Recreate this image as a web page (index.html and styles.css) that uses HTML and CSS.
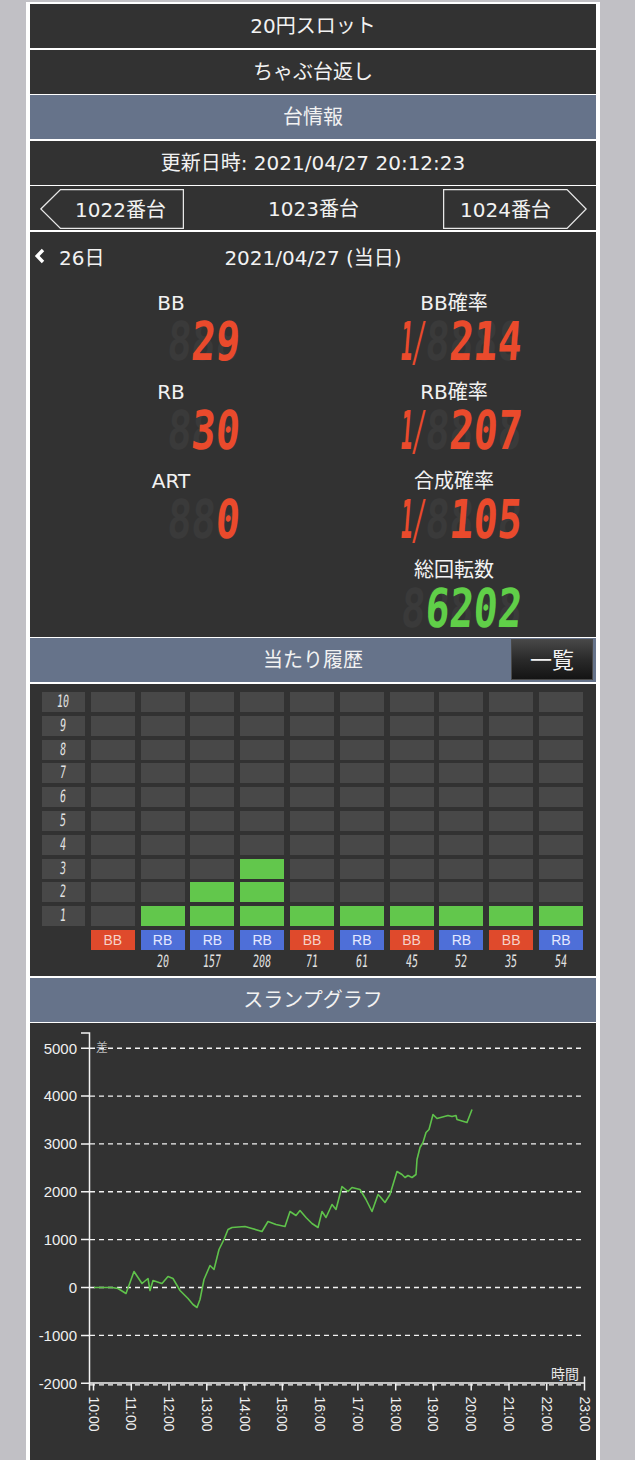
FILE: index.html
```html
<!DOCTYPE html>
<html lang="ja">
	<head>
		<meta charset="utf-8" />
		<title>台情報</title>
		<link rel="stylesheet" href="styles.css">
	</head>
	<body>
		<div class="page">
			<div class="bar">20円スロット</div>
			<div class="bar">ちゃぶ台返し</div>
			<div class="bar blue">台情報</div>
			<div class="bar">更新日時: 2021/04/27 20:12:23</div>

			<!-- 台移動 -->
			<div class="nav">
				<a class="navbtn prev-btn">
					<svg class="btn-shape" width="144" height="40" viewBox="0 0 144 40"><polygon points="0.8,20 20.5,0.6 143.4,0.6 143.4,39.4 20.5,39.4" /></svg>
					<span>1022番台</span>
				</a>
				<div class="cur">1023番台</div>
				<a class="navbtn next-btn">
					<svg class="btn-shape" width="144" height="40" viewBox="0 0 144 40"><polygon points="0.6,0.6 124,0.6 143.2,20 124,39.4 0.6,39.4" /></svg>
					<span>1024番台</span>
				</a>
			</div>

			<!-- 当日データ -->
			<div class="info">
				<div class="dateline">
					<a class="prev-day">
						<svg width="12" height="16" viewBox="0 0 12 16"><polyline points="9,2 3.2,8 9,14" /></svg>
						<span>26日</span>
					</a>
					<div class="date">2021/04/27 (当日)</div>
					<div></div>
				</div>

				<div class="stats">
					<div class="stat">
						<div class="label">BB</div>
						<div class="seg short"><div class="digits"><span class="ghost">888</span><span class="val">29</span></div></div>
					</div>
					<div class="stat">
						<div class="label">BB確率</div>
						<div class="seg wide"><span class="frac"><span>1/</span></span><div class="digits"><span class="ghost">8888</span><span class="val">214</span></div></div>
					</div>
					<div class="stat">
						<div class="label">RB</div>
						<div class="seg short"><div class="digits"><span class="ghost">888</span><span class="val">30</span></div></div>
					</div>
					<div class="stat">
						<div class="label">RB確率</div>
						<div class="seg wide"><span class="frac"><span>1/</span></span><div class="digits"><span class="ghost">8888</span><span class="val">207</span></div></div>
					</div>
					<div class="stat">
						<div class="label">ART</div>
						<div class="seg short"><div class="digits"><span class="ghost">888</span><span class="val">0</span></div></div>
					</div>
					<div class="stat">
						<div class="label">合成確率</div>
						<div class="seg wide"><span class="frac"><span>1/</span></span><div class="digits"><span class="ghost">8888</span><span class="val">105</span></div></div>
					</div>
					<div class="stat"></div>
					<div class="stat">
						<div class="label">総回転数</div>
						<div class="seg wide green"><div class="digits"><span class="ghost">88888</span><span class="val">6202</span></div></div>
					</div>
				</div>
			</div>

			<!-- 当たり履歴 -->
			<div class="bar blue hist-head">当たり履歴<a class="listbtn">一覧</a></div>
			<div class="hist">
				<i class="lab"><b>10</b></i><i></i><i></i><i></i><i></i><i></i><i></i><i></i><i></i><i></i><i></i>
				<i class="lab"><b>9</b></i><i></i><i></i><i></i><i></i><i></i><i></i><i></i><i></i><i></i><i></i>
				<i class="lab"><b>8</b></i><i></i><i></i><i></i><i></i><i></i><i></i><i></i><i></i><i></i><i></i>
				<i class="lab"><b>7</b></i><i></i><i></i><i></i><i></i><i></i><i></i><i></i><i></i><i></i><i></i>
				<i class="lab"><b>6</b></i><i></i><i></i><i></i><i></i><i></i><i></i><i></i><i></i><i></i><i></i>
				<i class="lab"><b>5</b></i><i></i><i></i><i></i><i></i><i></i><i></i><i></i><i></i><i></i><i></i>
				<i class="lab"><b>4</b></i><i></i><i></i><i></i><i></i><i></i><i></i><i></i><i></i><i></i><i></i>
				<i class="lab"><b>3</b></i><i></i><i></i><i></i><i class="on"></i><i></i><i></i><i></i><i></i><i></i><i></i>
				<i class="lab"><b>2</b></i><i></i><i></i><i class="on"></i><i class="on"></i><i></i><i></i><i></i><i></i><i></i><i></i>
				<i class="lab"><b>1</b></i><i></i><i class="on"></i><i class="on"></i><i class="on"></i><i class="on"></i><i class="on"></i><i class="on"></i><i class="on"></i><i class="on"></i><i class="on"></i>

				<i class="blank"></i><i class="bb">BB</i><i class="rb">RB</i><i class="rb">RB</i><i class="rb">RB</i><i class="bb">BB</i><i class="rb">RB</i><i class="bb">BB</i><i class="rb">RB</i><i class="bb">BB</i><i class="rb">RB</i>

				<i class="blank"></i><i class="blank"></i><i class="cnt"><b>20</b></i><i class="cnt"><b>157</b></i><i class="cnt"><b>208</b></i><i class="cnt"><b>71</b></i><i class="cnt"><b>61</b></i><i class="cnt"><b>45</b></i><i class="cnt"><b>52</b></i><i class="cnt"><b>35</b></i><i class="cnt"><b>54</b></i>
			</div>

			<!-- スランプグラフ -->
			<div class="bar blue">スランプグラフ</div>
			<div class="graph">
				<svg class="chart" width="566" height="437" viewBox="30 1023.5 566 437">
					<g class="grid">
						<line x1="90" y1="1048.7" x2="584" y2="1048.7" />
						<line x1="90" y1="1096.6" x2="584" y2="1096.6" />
						<line x1="90" y1="1144.4" x2="584" y2="1144.4" />
						<line x1="90" y1="1192.3" x2="584" y2="1192.3" />
						<line x1="90" y1="1240.1" x2="584" y2="1240.1" />
						<line x1="90" y1="1288" x2="584" y2="1288" />
						<line x1="90" y1="1335.9" x2="584" y2="1335.9" />
						<line x1="90" y1="1385.4" x2="584" y2="1385.4" />
					</g>
					<g class="axis">
						<path d="M81 1033.5 H89.5 V1391" />
						<path d="M89.5 1383.5 H584.5 M584.5 1377 V1391" />
						<path d="M81 1048.7 H89.5 M81 1096.6 H89.5 M81 1144.4 H89.5 M81 1192.3 H89.5 M81 1240.1 H89.5 M81 1288 H89.5 M81 1335.9 H89.5 M81 1383.7 H89.5" />
						<path d="M93.5 1384 V1391 M131.3 1384 V1391 M169 1384 V1391 M206.8 1384 V1391 M244.6 1384 V1391 M282.4 1384 V1391 M320.1 1384 V1391 M357.9 1384 V1391 M395.7 1384 V1391 M433.4 1384 V1391 M471.2 1384 V1391 M509 1384 V1391 M546.7 1384 V1391" />
					</g>
					<g class="ylab">
						<text x="77" y="1054">5000</text>
						<text x="77" y="1101.9">4000</text>
						<text x="77" y="1149.7">3000</text>
						<text x="77" y="1197.6">2000</text>
						<text x="77" y="1245.4">1000</text>
						<text x="77" y="1293.3">0</text>
						<text x="77" y="1341.2">-1000</text>
						<text x="77" y="1389">-2000</text>
					</g>
					<g class="xlab">
						<text transform="translate(93.5 1397) rotate(90)">10:00</text>
						<text transform="translate(131.3 1397) rotate(90)">11:00</text>
						<text transform="translate(169 1397) rotate(90)">12:00</text>
						<text transform="translate(206.8 1397) rotate(90)">13:00</text>
						<text transform="translate(244.6 1397) rotate(90)">14:00</text>
						<text transform="translate(282.4 1397) rotate(90)">15:00</text>
						<text transform="translate(320.1 1397) rotate(90)">16:00</text>
						<text transform="translate(357.9 1397) rotate(90)">17:00</text>
						<text transform="translate(395.7 1397) rotate(90)">18:00</text>
						<text transform="translate(433.4 1397) rotate(90)">19:00</text>
						<text transform="translate(471.2 1397) rotate(90)">20:00</text>
						<text transform="translate(509 1397) rotate(90)">21:00</text>
						<text transform="translate(546.7 1397) rotate(90)">22:00</text>
						<text transform="translate(584.5 1397) rotate(90)">23:00</text>
					</g>
					<text class="unit" x="96" y="1052">差</text>
					<text class="unit time" x="551" y="1379">時間</text>
					<polyline class="line" points="94,1288 112,1288 118,1289 126,1294 134,1272 142,1284 148,1279 150,1291 153,1281 162,1284 168,1277 173,1279 180,1291 188,1299 193,1305 197,1308 200,1300 204,1280 210,1266 214,1270 219,1250 224,1240 228,1230 232,1228 245,1227 252,1229 262,1232 268,1222 276,1225 285,1227 290,1212 296,1216 300,1211 306,1218 312,1224 318,1228 322,1212 326,1218 332,1205 336,1210 342,1187 348,1192 352,1188 360,1190 366,1200 372,1212 378,1195 380,1197 385,1203 390,1195 397,1172 402,1175 405,1178 408,1176 412,1178 416,1175 417,1160 420,1148 423,1143 426,1133 429,1130 433,1115 437,1119 448,1116 452,1117 456,1116 457,1120 467,1123 472,1110" />
				</svg>
			</div>
		</div>
	</body>
</html>
```

FILE: styles.css
```css
body {
    margin: 0;
    background-color: #c1c0c5;
    font-family: "DejaVu Sans", "Noto Sans CJK JP", sans-serif;
    color: #f2f2f2;
}

.page {
    width: 574px;
    margin: 2px 0 0 26px;
    padding: 2px 4px 0 4px;
    box-sizing: border-box;
    background-color: #fff;
}

/* 見出し行 */
.bar {
    height: 44px;
    line-height: 44px;
    margin-bottom: 1.5px;
    text-align: center;
    font-size: 20px;
    background-color: #323232;
}

.bar.blue {
    background-color: #66738a;
}

/* 台移動 */
.nav {
    display: flex;
    align-items: center;
    height: 44px;
    margin-bottom: 1.5px;
    padding: 1px 9px 0 10px;
    box-sizing: border-box;
    background-color: #323232;
    font-size: 20px;
}

.navbtn {
    position: relative;
    display: flex;
    align-items: center;
    width: 144px;
    height: 40px;
    flex: none;
}

.btn-shape {
    position: absolute;
    left: 0;
    top: 0;
}

.btn-shape polygon {
    fill: none;
    stroke: #e8e8e8;
    stroke-width: 1.3;
}

.navbtn span {
    position: relative;
}

.prev-btn span {
    padding-left: 35px;
}

.next-btn span {
    padding-left: 17px;
}

.cur {
    flex: 1;
    text-align: center;
    margin-top: -3px;
}

/* 当日データ */
.info {
    background-color: #323232;
    margin-bottom: 1.5px;
}

.dateline {
    display: grid;
    grid-template-columns: 1fr auto 1fr;
    align-items: center;
    height: 49px;
    font-size: 20px;
}

.prev-day {
    display: flex;
    align-items: center;
    gap: 13px;
    padding-left: 4px;
}

.prev-day polyline {
    fill: none;
    stroke: #fff;
    stroke-width: 3.4;
}

.stats {
    display: grid;
    grid-template-columns: 282px 1fr;
}

.stat {
    height: 89px;
    padding-top: 11.5px;
    box-sizing: border-box;
}

.stat .label {
    height: 22px;
    line-height: 22px;
    text-align: center;
    font-size: 20px;
}

.seg {
    display: flex;
    height: 40px;
    margin-top: 7px;
    font-family: "DejaVu Sans Mono", monospace;
    font-weight: bold;
    font-size: 40px;
    line-height: 40px;
    color: #ea4a2c;
    transform: scaleY(1.34) skewX(-6deg);
}

.seg.short {
    width: 72px;
    margin-left: 138px;
}

.seg.wide {
    width: 121px;
    margin-left: 89px;
}

.seg.green {
    color: #60cf48;
}

.frac {
    flex: none;
    width: 24px;
    white-space: nowrap;
}

.frac span {
    display: inline-block;
    transform: scaleX(0.5);
    transform-origin: 0 0;
}

.digits {
    position: relative;
    flex: 1;
    text-align: right;
    white-space: pre;
}

.digits .ghost {
    position: absolute;
    right: 0;
    top: 0;
    color: #3a3a3a;
}

.digits .val {
    position: relative;
}

/* 当たり履歴 */
.hist-head {
    position: relative;
}

.listbtn {
    position: absolute;
    right: 3px;
    top: 1px;
    width: 82px;
    height: 41px;
    line-height: 41px;
    box-sizing: border-box;
    border: 1px solid #4a4a4a;
    background: linear-gradient(#474747, #2a2a2a 50%, #141414);
    font-size: 22px;
    text-align: center;
}

.hist {
    display: grid;
    grid-template-columns: 43px repeat(10, 44px);
    grid-template-rows: repeat(11, 20px) 16px;
    column-gap: 5.8px;
    row-gap: 3.8px;
    padding: 8.5px 0 6.5px 12px;
    margin-bottom: 1.5px;
    background-color: #323232;
}

.hist i {
    display: block;
    font-style: normal;
    background-color: #484848;
}

.hist i.on {
    background-color: #62c74c;
}

.hist i.blank,
.hist i.cnt {
    background: none;
}

.hist i.bb,
.hist i.rb {
    line-height: 20px;
    text-align: center;
    font-family: "Liberation Sans", sans-serif;
    font-size: 14px;
}

.hist i.bb {
    background-color: #df4a2c;
    color: #f6d3c9;
}

.hist i.rb {
    background-color: #4e6fd8;
    color: #e4e8ff;
}

.hist i.lab,
.hist i.cnt {
    display: flex;
    align-items: center;
    justify-content: center;
}

.hist b {
    display: inline-block;
    font-family: "DejaVu Sans Mono", monospace;
    font-weight: normal;
    font-size: 10px;
    line-height: 10px;
    color: #e2e2e2;
    transform: scaleY(1.7) skewX(-8deg);
}

/* スランプグラフ */
.graph {
    background-color: #323232;
}

.chart {
    display: block;
}

.grid line {
    stroke: #f2f2f2;
    stroke-width: 1.4;
    stroke-dasharray: 5 4;
}

.axis path {
    fill: none;
    stroke: #f2f2f2;
    stroke-width: 1.5;
}

.ylab text,
.xlab text,
.unit {
    fill: #efefef;
    font-family: "Liberation Sans", "Noto Sans CJK JP", sans-serif;
    font-size: 15px;
}

.ylab text {
    text-anchor: end;
}

.xlab text {
    font-size: 14px;
    dominant-baseline: central;
}

.unit {
    font-size: 12px;
    fill: #bdbdbd;
}

.unit.time {
    font-size: 14px;
    fill: #e8e8e8;
}

.line {
    fill: none;
    stroke: #5fc24b;
    stroke-width: 1.6;
    stroke-linejoin: round;
}
```
